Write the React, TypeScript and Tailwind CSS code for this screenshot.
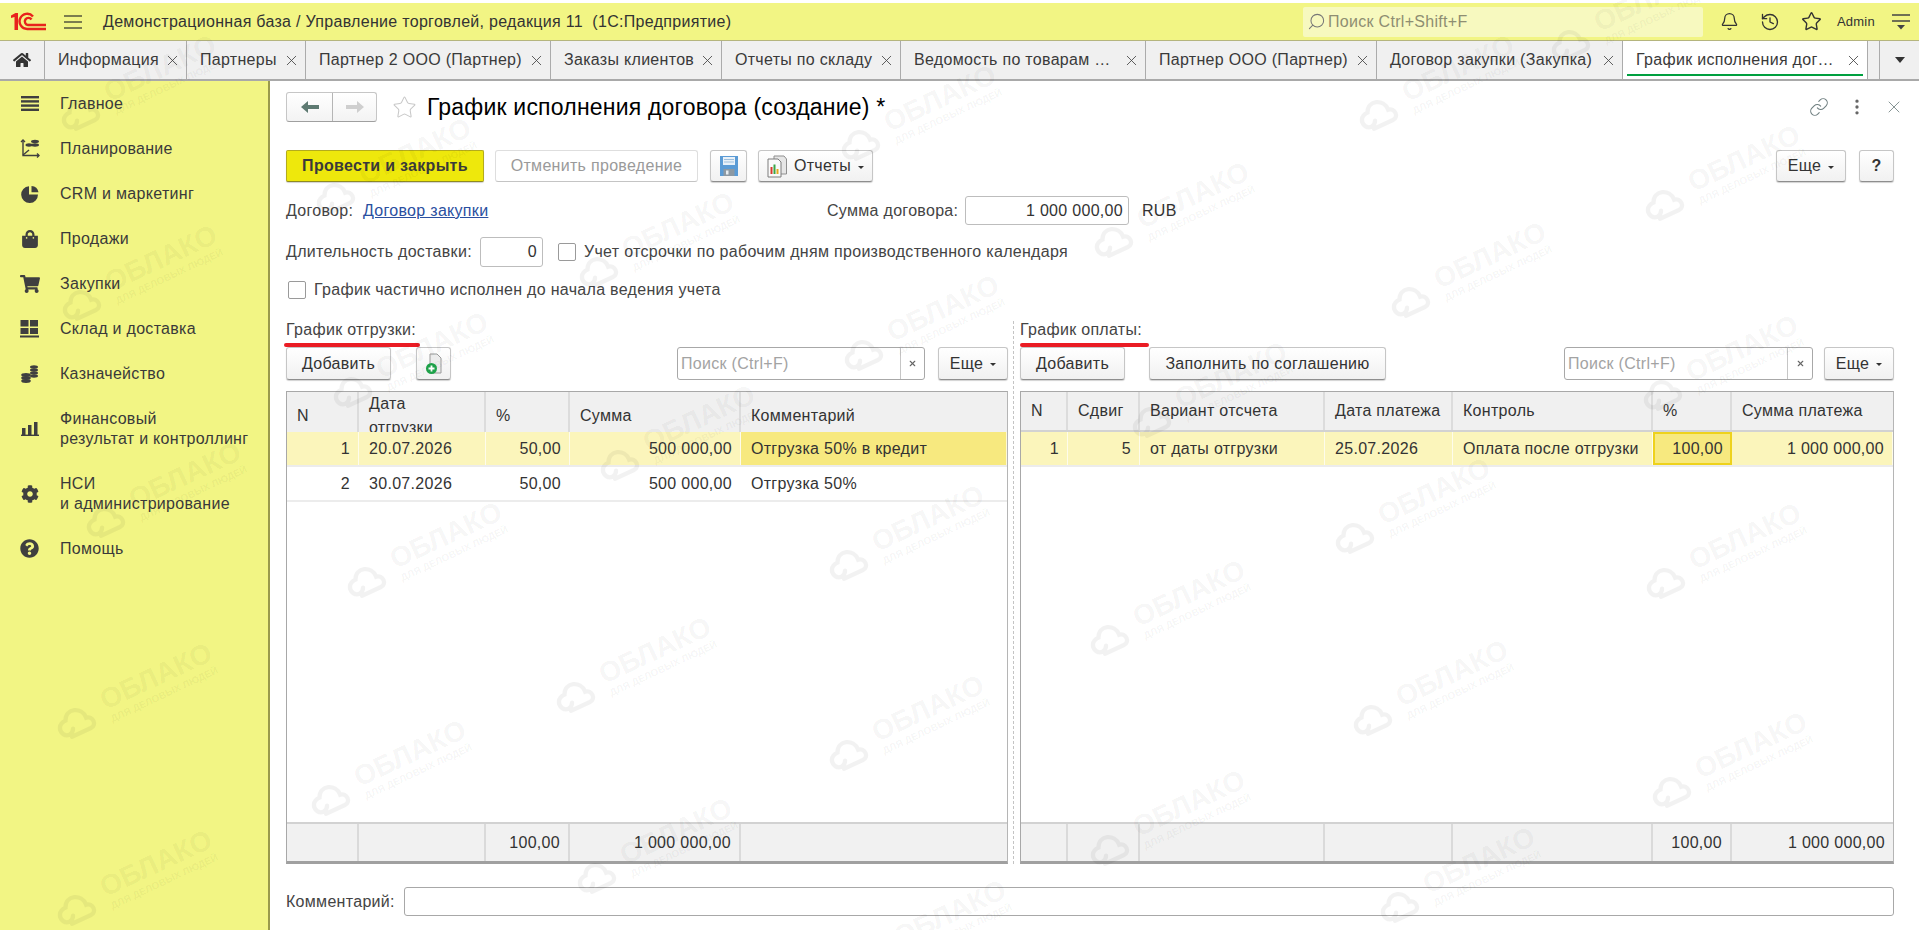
import { ReactNode } from "react";
import { Bell, History, Link, MoreVertical, Search, Star, X } from "lucide-react";
import { FaCog, FaHome, FaQuestionCircle, FaShoppingBag, FaShoppingCart } from "react-icons/fa";

const tabs = [
  { title: "Информация", width: "w-[142px]" },
  { title: "Партнеры", width: "w-[119px]" },
  { title: "Партнер 2 ООО (Партнер)", width: "w-[245px]" },
  { title: "Заказы клиентов", width: "w-[171px]" },
  { title: "Отчеты по складу", width: "w-[179px]" },
  { title: "Ведомость по товарам …", width: "w-[245px]" },
  { title: "Партнер ООО (Партнер)", width: "w-[231px]" },
  { title: "Договор закупки (Закупка)", width: "w-[246px]" },
];

const watermarks = [
  [182, 60], [437, 143], [700, 217], [962, 90], [1215, 187], [1480, 60], [1766, 150], [1512, 247],
  [965, 300], [183, 250], [207, 467], [454, 337], [721, 410], [1253, 367], [1764, 340], [1456, 483],
  [468, 527], [950, 510], [1211, 585], [1767, 528], [178, 668], [677, 642], [950, 700], [1474, 665],
  [1773, 737], [432, 745], [1211, 795], [178, 855], [698, 823], [1501, 852], [972, 905], [1672, -10],
];

function MenuIcon() {
  return (
    <svg width="18" height="18" viewBox="0 0 18 18" fill="#3f3f3f">
      <rect y="1" width="18" height="2.4" />
      <rect y="5.2" width="18" height="2.4" />
      <rect y="9.4" width="18" height="2.4" />
      <rect y="13.6" width="18" height="2.4" />
    </svg>
  );
}

function PlanIcon() {
  return (
    <svg width="20" height="20" viewBox="0 0 20 20" fill="none" stroke="#3f3f3f" strokeWidth="1.4">
      <path d="M3 1v15.5h16" />
      <path d="M1 3l2-2 2 2M17 14.5l2 2-2 2" />
      <path d="M3 16l6-5" />
      <ellipse cx="15" cy="2.5" rx="4" ry="1.7" fill="#3f3f3f" stroke="none" />
      <ellipse cx="15" cy="6" rx="4" ry="1.7" fill="#3f3f3f" stroke="none" />
      <ellipse cx="9" cy="6" rx="3.5" ry="1.7" fill="#3f3f3f" stroke="none" />
    </svg>
  );
}

function PieIcon() {
  return (
    <svg width="18" height="18" viewBox="0 0 18 18" fill="#3f3f3f">
      <path d="M8 1.2V9.5H17A8.4 8.4 0 1 1 8 1.2Z" />
      <path d="M10.5 1a7.6 7.6 0 0 1 7 6.3h-7Z" />
    </svg>
  );
}

function StockIcon() {
  return (
    <svg width="19" height="18" viewBox="0 0 19 18" fill="#3f3f3f">
      <rect x="0.5" y="0" width="8" height="6.5" />
      <rect x="10" y="0" width="8" height="6.5" />
      <rect x="0.5" y="8" width="8" height="6" />
      <rect x="10" y="8" width="8" height="6" />
      <rect x="0" y="15.5" width="19" height="2" />
    </svg>
  );
}

function CoinsIcon() {
  return (
    <svg width="18" height="18" viewBox="0 0 18 18" fill="#3f3f3f">
      <ellipse cx="5" cy="10" rx="4.8" ry="1.9" />
      <ellipse cx="5" cy="13" rx="4.8" ry="1.9" />
      <ellipse cx="5" cy="16" rx="4.8" ry="1.9" />
      <ellipse cx="13" cy="2" rx="4" ry="1.7" />
      <ellipse cx="13" cy="5" rx="4" ry="1.7" />
      <ellipse cx="13" cy="8" rx="4" ry="1.7" />
      <ellipse cx="13" cy="11" rx="4" ry="1.7" />
    </svg>
  );
}

function BarsIcon() {
  return (
    <svg width="18" height="14" viewBox="0 0 18 14" fill="#3f3f3f">
      <rect x="1" y="6" width="3.5" height="7" />
      <rect x="7" y="3" width="3.5" height="10" />
      <rect x="13" y="0" width="3.5" height="13" />
      <rect x="0" y="12.6" width="18" height="1.4" />
    </svg>
  );
}

function Logo() {
  return (
    <svg width="35" height="19" viewBox="0 0 35 19" fill="none" stroke="#e8231c">
      <path d="M0 3.5L4.5 1H7V18H3.5V5L0 6Z" fill="#e8231c" stroke="none" />
      <path d="M22 4.5A7.6 7.6 0 1 0 16.5 17H35" strokeWidth="2.4" />
      <path d="M20.5 7.5A3.6 3.6 0 1 0 17 13H35" strokeWidth="2.4" />
    </svg>
  );
}

function Hamburger() {
  return (
    <svg width="18" height="14" viewBox="0 0 18 14" stroke="#55553c" strokeWidth="1.4">
      <path d="M0 1h18M0 7h18M0 13h18" />
    </svg>
  );
}

function UserMenuIcon() {
  return (
    <svg width="18" height="16" viewBox="0 0 18 16" fill="#444" stroke="#444" strokeWidth="1.3">
      <path d="M0 1h18M0 7h18" />
      <path d="M5 11h8l-4 4.5Z" stroke="none" />
    </svg>
  );
}

function Cloud() {
  return (
    <svg width="40" height="36" viewBox="0 0 46 40" fill="none" stroke="currentColor" strokeWidth="5" strokeLinecap="round">
      <path d="M12 35H36C44 35 44 23 36 22C37 8 19 2 13 15C4 15 1 22 4 28C7 33 14 33 17 27" />
    </svg>
  );
}

function Watermarks() {
  return (
    <div className="pointer-events-none absolute inset-0 z-20 overflow-hidden tracking-normal text-black/[0.05]">
      {watermarks.map(([x, y]) => (
        <div
          key={`${x}-${y}`}
          className="absolute flex -translate-x-1/2 -translate-y-1/2 -rotate-[25deg] items-center gap-[12px] whitespace-nowrap"
          style={{ left: x - 43, top: y + 25 }}
        >
          <Cloud />
          <div className="flex flex-col items-center">
            <span className="text-[28px] leading-[28px] font-bold">ОБЛАКО</span>
            <span className="text-[10px] leading-[12px] font-bold">ДЛЯ ДЕЛОВЫХ ЛЮДЕЙ</span>
          </div>
        </div>
      ))}
    </div>
  );
}

function Tab({ title, width }: { title: string; width: string }) {
  return (
    <div className={`flex h-full items-center justify-between border-r border-[#ababab] pr-[5px] pl-[13px] ${width}`}>
      <span className="whitespace-nowrap">{title}</span>
      <X size={17} strokeWidth={1.2} className="shrink-0 text-[#444]" />
    </div>
  );
}

function NavItem({ icon, children }: { icon: ReactNode; children: ReactNode }) {
  return (
    <div className="flex items-center py-[12.5px] leading-[20px]">
      <div className="flex w-[60px] shrink-0 justify-center pr-[1px]">{icon}</div>
      <div>{children}</div>
    </div>
  );
}

function Btn({ className = "", children }: { className?: string; children: ReactNode }) {
  return (
    <button
      className={`flex items-center justify-center rounded-[3px] border border-[#c6c6c6] border-b-[#8e8e8e] bg-linear-to-b from-white to-[#f1f1f1] shadow-[0_1px_1px_rgba(0,0,0,0.18)] ${className}`}
    >
      {children}
    </button>
  );
}

function Caret() {
  return <span className="ml-[7px] h-0 w-0 translate-y-[1px] border-x-[3px] border-t-[3px] border-x-transparent border-t-[#333]" />;
}

function SearchBox({ width, clearWidth }: { width: string; clearWidth: string }) {
  return (
    <div className={`flex h-[33px] items-stretch rounded-[3px] border border-[#a8a8a8] bg-white ${width}`}>
      <div className="flex flex-1 items-center pl-[3px] text-[#a3a3a3]">Поиск (Ctrl+F)</div>
      <div className={`flex items-center justify-center border-l border-[#c6c6c6] text-[#666] ${clearWidth}`}>
        <X size={9} strokeWidth={3} />
      </div>
    </div>
  );
}

function Checkbox() {
  return <span className="block h-[18px] w-[18px] shrink-0 rounded-[2px] border border-[#9a9a9a] bg-white" />;
}

function SaveIcon() {
  return (
    <svg width="18" height="20" viewBox="0 0 18 20">
      <path d="M0 0H18V20H0Z" fill="#5b9bd5" />
      <rect x="3" y="1" width="12" height="8" fill="#e9f1f8" />
      <path d="M4 3.5h10M4 6h10" stroke="#9dbfdd" strokeWidth="1" />
      <rect x="3.5" y="13" width="11" height="7" fill="#8d99a3" />
      <rect x="6" y="14.5" width="2.5" height="4" fill="#e7edf2" />
    </svg>
  );
}

function ReportIcon() {
  return (
    <svg width="20" height="23" viewBox="0 0 20 23">
      <path d="M7 1H17L19.5 4V19H7Z" fill="#e6e6e6" stroke="#8f8f8f" />
      <path d="M1 4H11L14 7V22H1Z" fill="#fafafa" stroke="#7d7d7d" />
      <rect x="3.5" y="12" width="2" height="7" fill="#d83a2e" />
      <rect x="6.5" y="9.5" width="2" height="9.5" fill="#3aa648" />
      <rect x="9.5" y="14" width="2" height="5" fill="#e2a91f" />
    </svg>
  );
}

function AddDocIcon() {
  return (
    <svg width="18" height="22" viewBox="0 0 18 22">
      <path d="M5 1H12L16 5V20H5Z" fill="#ececec" stroke="#9a9a9a" />
      <circle cx="6.5" cy="15.5" r="5.5" fill="#1ea34a" />
      <path d="M6.5 12.5v6M3.5 15.5h6" stroke="#fff" strokeWidth="1.8" />
    </svg>
  );
}

function TableShell({ children, width }: { children: ReactNode; width: string }) {
  return (
    <div className={`flex h-[473px] flex-col border border-t-[#a8a8a8] border-r-[#b5b5b5] border-b-[3px] border-l-[#a8a8a8] border-b-[#a0a0a0] bg-white ${width}`}>
      {children}
    </div>
  );
}

function Cell({ children, right, className = "" }: { children?: ReactNode; right?: boolean; className?: string }) {
  return (
    <div className={`flex items-center overflow-hidden border-r border-white/70 whitespace-nowrap ${right ? "justify-end pr-[8px]" : "px-[10px]"} ${className}`}>
      {children}
    </div>
  );
}

function HeadCell({ children, last }: { children?: ReactNode; last?: boolean }) {
  return <div className={`flex items-center bg-[#f0f0f0] px-[10px] ${last ? "" : "border-r-2 border-[#dcdcdc]"}`}>{children}</div>;
}

function FootCell({ children, last }: { children?: ReactNode; last?: boolean }) {
  return <div className={`flex items-center justify-end bg-[#f1f1f1] pr-[8px] ${last ? "" : "border-r-2 border-[#dadada]"}`}>{children}</div>;
}

function ShipTable() {
  const cols = "grid grid-cols-[72px_127px_84px_171px_1fr]";
  return (
    <TableShell width="w-[722px]">
      <div className={`${cols} h-[40px] border-b-2 border-[#d2d2d2]`}>
        <HeadCell>N</HeadCell>
        <HeadCell>Дата отгрузки</HeadCell>
        <HeadCell>%</HeadCell>
        <HeadCell>Сумма</HeadCell>
        <HeadCell last>Комментарий</HeadCell>
      </div>
      <div className={`${cols} h-[35px] border-b-2 border-[#ececec] bg-[#fbf5bb]`}>
        <Cell right>1</Cell>
        <Cell>20.07.2026</Cell>
        <Cell right>50,00</Cell>
        <Cell right>500 000,00</Cell>
        <Cell className="bg-[#f7e97f]">Отгрузка 50% в кредит</Cell>
      </div>
      <div className={`${cols} h-[35px] border-b-2 border-[#ececec]`}>
        <Cell right>2</Cell>
        <Cell>30.07.2026</Cell>
        <Cell right>50,00</Cell>
        <Cell right>500 000,00</Cell>
        <Cell>Отгрузка 50%</Cell>
      </div>
      <div className="flex-1" />
      <div className={`${cols} h-[39px] border-t-2 border-[#d2d2d2]`}>
        <FootCell />
        <FootCell />
        <FootCell>100,00</FootCell>
        <FootCell>1 000 000,00</FootCell>
        <FootCell last />
      </div>
    </TableShell>
  );
}

function PayTable() {
  const cols = "grid grid-cols-[47px_72px_185px_128px_200px_79px_1fr]";
  return (
    <TableShell width="w-[874px]">
      <div className={`${cols} h-[40px] border-b-2 border-[#d2d2d2]`}>
        <HeadCell>N</HeadCell>
        <HeadCell>Сдвиг</HeadCell>
        <HeadCell>Вариант отсчета</HeadCell>
        <HeadCell>Дата платежа</HeadCell>
        <HeadCell>Контроль</HeadCell>
        <HeadCell>%</HeadCell>
        <HeadCell last>Сумма платежа</HeadCell>
      </div>
      <div className={`${cols} h-[35px] border-b-2 border-[#ececec] bg-[#fbf5bb]`}>
        <Cell right>1</Cell>
        <Cell right>5</Cell>
        <Cell>от даты отгрузки</Cell>
        <Cell>25.07.2026</Cell>
        <Cell className="px-[9px]">Оплата после отгрузки</Cell>
        <div className="flex items-center justify-end border-2 border-[#eed21c] bg-[#f7e97f] pr-[7px]">100,00</div>
        <Cell right>1 000 000,00</Cell>
      </div>
      <div className="flex-1" />
      <div className={`${cols} h-[39px] border-t-2 border-[#d2d2d2]`}>
        <FootCell />
        <FootCell />
        <FootCell />
        <FootCell />
        <FootCell />
        <FootCell>100,00</FootCell>
        <FootCell last>1 000 000,00</FootCell>
      </div>
    </TableShell>
  );
}

function SectionLabel({ children, underline }: { children: ReactNode; underline: string }) {
  return (
    <div className="relative h-[18px] leading-[18px] text-[#444]">
      {children}
      <span className={`absolute top-[22px] h-[4px] rounded-full bg-[#ea1c24] ${underline}`} />
    </div>
  );
}

export default function App() {
  return (
    <div className="relative h-[930px] w-full overflow-hidden bg-white font-['Liberation_Sans',Arial,sans-serif] text-[16px] tracking-[0.3px] text-[#333]">
      <header className="mt-[3px] flex h-[38px] items-center border-b border-[#b5b57e] bg-[#f2f584]">
        <div className="ml-[11px] w-[35px]">
          <Logo />
        </div>
        <div className="ml-[18px]">
          <Hamburger />
        </div>
        <div className="ml-[21px]">Демонстрационная база / Управление торговлей, редакция 11&nbsp;&nbsp;(1С:Предприятие)</div>
        <div className="ml-auto flex h-[30px] w-[400px] items-center rounded-[2px] bg-[#f7f9bf] pl-[4px] text-[#8e8e72]">
          <Search size={19} strokeWidth={1.3} className="-scale-x-100 text-[#777]" />
          <span className="ml-[2px]">Поиск Ctrl+Shift+F</span>
        </div>
        <div className="ml-[17px] flex items-center text-[#333]">
          <Bell size={19} strokeWidth={1.6} />
          <History size={20} strokeWidth={1.6} className="ml-[21px]" />
          <Star size={21} strokeWidth={1.6} className="ml-[21px]" />
          <span className="ml-[15px] w-[37px] text-[13px] tracking-[0.2px]">Admin</span>
          <div className="mr-[9px] ml-[18px]">
            <UserMenuIcon />
          </div>
        </div>
      </header>

      <nav className="flex h-[40px] items-stretch border-b-2 border-[#a9a9a9] bg-[#f0f0f0] text-[#3a3a3a]">
        <div className="flex w-[45px] items-center justify-center border-r border-[#ababab] text-[#333]">
          <FaHome size={18} />
        </div>
        {tabs.map((tab) => (
          <Tab key={tab.title} title={tab.title} width={tab.width} />
        ))}
        <div className="relative flex w-[245px] items-center justify-between border-r border-[#ababab] bg-white pr-[5px] pl-[13px]">
          <span className="whitespace-nowrap">График исполнения дог…</span>
          <X size={17} strokeWidth={1.2} className="text-[#444]" />
          <span className="absolute right-[4px] bottom-[3px] left-[4px] h-[2px] bg-[#00a040]" />
        </div>
        <div className="w-[12px] border-r border-[#ababab]" />
        <div className="flex flex-1 items-center justify-center">
          <span className="h-0 w-0 border-x-[5px] border-t-[6px] border-x-transparent border-t-[#333]" />
        </div>
      </nav>

      <div className="flex h-[849px]">
        <aside className="w-[270px] shrink-0 border-r-2 border-[#9a9a4c] bg-[#f2f584] text-[#3a3a3a]">
          <NavItem icon={<MenuIcon />}>Главное</NavItem>
          <NavItem icon={<PlanIcon />}>Планирование</NavItem>
          <NavItem icon={<PieIcon />}>CRM и маркетинг</NavItem>
          <NavItem icon={<FaShoppingBag size={18} color="#3f3f3f" />}>Продажи</NavItem>
          <NavItem icon={<FaShoppingCart size={20} color="#3f3f3f" />}>Закупки</NavItem>
          <NavItem icon={<StockIcon />}>Склад и доставка</NavItem>
          <NavItem icon={<CoinsIcon />}>Казначейство</NavItem>
          <NavItem icon={<BarsIcon />}>
            Финансовый
            <br />
            результат и контроллинг
          </NavItem>
          <NavItem icon={<FaCog size={18} color="#3f3f3f" />}>
            НСИ
            <br />и администрирование
          </NavItem>
          <NavItem icon={<FaQuestionCircle size={19} color="#3f3f3f" />}>Помощь</NavItem>
        </aside>

        <main className="flex min-w-0 flex-1 flex-col pt-[11px] pr-[25px] pl-[16px]">
          <div className="flex h-[30px] items-center">
            <div className="flex h-[30px] w-[91px] rounded-[3px] border border-[#c6c6c6] border-b-[#a0a0a0] bg-linear-to-b from-white to-[#f3f3f3]">
              <div className="flex w-[46px] items-center justify-center border-r border-[#b5b5b5]">
                <svg width="18" height="12" viewBox="0 0 18 12" fill="#5e7a72">
                  <path d="M0 6L7 0V4H18V8H7V12Z" />
                </svg>
              </div>
              <div className="flex flex-1 items-center justify-center">
                <svg width="18" height="12" viewBox="0 0 18 12" fill="#cfcfcf">
                  <path d="M18 6L11 0V4H0V8H11V12Z" />
                </svg>
              </div>
            </div>
            <Star size={25} strokeWidth={1} className="ml-[15px] text-[#c8c8c8]" />
            <h1 className="ml-[10px] text-[23px] tracking-[0.2px] text-black">График исполнения договора (создание) *</h1>
            <div className="-mr-[10px] ml-auto flex items-center text-[#6f7f80]">
              <Link size={20} strokeWidth={1.3} />
              <MoreVertical size={20} strokeWidth={2} className="ml-[18px] text-[#666]" />
              <X size={20} strokeWidth={1} className="ml-[17px]" />
            </div>
          </div>

          <div className="mt-[28px] flex h-[32px]">
            <button className="h-full w-[198px] rounded-[2px] border border-[#b4ac1c] border-b-[#8f8a20] bg-[#eee80c] font-bold text-[#3a3a3a] shadow-[0_1px_1px_rgba(0,0,0,0.18)]">
              Провести и закрыть
            </button>
            <div className="ml-[11px] flex h-full w-[203px] items-center justify-center rounded-[3px] border border-[#dedede] border-b-[#c4c4c4] text-[#9a9a9a]">
              Отменить проведение
            </div>
            <Btn className="ml-[12px] h-full w-[37px]">
              <SaveIcon />
            </Btn>
            <Btn className="ml-[11px] h-full w-[115px]">
              <ReportIcon />
              <span className="ml-[7px]">Отчеты</span>
              <Caret />
            </Btn>
            <Btn className="ml-auto h-full w-[70px]">
              Еще
              <Caret />
            </Btn>
            <Btn className="ml-[13px] h-full w-[35px] font-bold">?</Btn>
          </div>

          <div className="mt-[14px] flex h-[29px] items-center">
            <div className="flex w-[541px]">
              <span className="w-[77px] text-[#444]">Договор:</span>
              <span className="text-[#2a4fa0] underline">Договор закупки</span>
            </div>
            <span className="w-[138px] text-[#444]">Сумма договора:</span>
            <div className="flex h-full w-[164px] items-center justify-end rounded-[3px] border border-[#bdbdbd] pr-[5px]">1 000 000,00</div>
            <span className="ml-[13px]">RUB</span>
          </div>

          <div className="mt-[12px] flex h-[30px] items-center">
            <span className="w-[194px] whitespace-nowrap text-[#444]">Длительность доставки:</span>
            <div className="flex h-full w-[63px] items-center justify-end rounded-[3px] border border-[#bdbdbd] pr-[5px]">0</div>
            <div className="ml-[15px]">
              <Checkbox />
            </div>
            <span className="ml-[8px] text-[#444]">Учет отсрочки по рабочим дням производственного календаря</span>
          </div>

          <div className="mt-[14px] flex h-[18px] items-center pl-[2px]">
            <Checkbox />
            <span className="ml-[8px] text-[#444]">График частично исполнен до начала ведения учета</span>
          </div>

          <div className="mt-[22px] flex gap-[12px]">
            <section className="w-[722px]">
              <SectionLabel underline="-left-[2px] w-[136px]">График отгрузки:</SectionLabel>
              <div className="mt-[8px] mb-[11px] flex h-[33px]">
                <Btn className="w-[105px]">Добавить</Btn>
                <Btn className="ml-[25px] w-[35px]">
                  <AddDocIcon />
                </Btn>
                <div className="ml-[226px]">
                  <SearchBox width="w-[248px]" clearWidth="w-[24px]" />
                </div>
                <Btn className="ml-[13px] w-[70px]">
                  Еще
                  <Caret />
                </Btn>
              </div>
              <ShipTable />
            </section>

            <section className="relative w-[874px]">
              <span className="absolute top-0 -left-[7px] h-[543px] border-l border-dashed border-[#c4c4c4]" />
              <SectionLabel underline="left-0 w-[129px]">График оплаты:</SectionLabel>
              <div className="mt-[8px] mb-[11px] flex h-[33px]">
                <Btn className="w-[105px]">Добавить</Btn>
                <Btn className="ml-[24px] w-[237px]">Заполнить по соглашению</Btn>
                <div className="ml-[178px]">
                  <SearchBox width="w-[249px]" clearWidth="w-[25px]" />
                </div>
                <Btn className="ml-[11px] w-[70px]">
                  Еще
                  <Caret />
                </Btn>
              </div>
              <PayTable />
            </section>
          </div>

          <div className="mt-[23px] flex h-[29px] items-center">
            <span className="w-[118px] text-[#444]">Комментарий:</span>
            <div className="h-full flex-1 rounded-[3px] border border-[#a8a8a8] bg-white" />
          </div>
        </main>
      </div>

      <Watermarks />
    </div>
  );
}
